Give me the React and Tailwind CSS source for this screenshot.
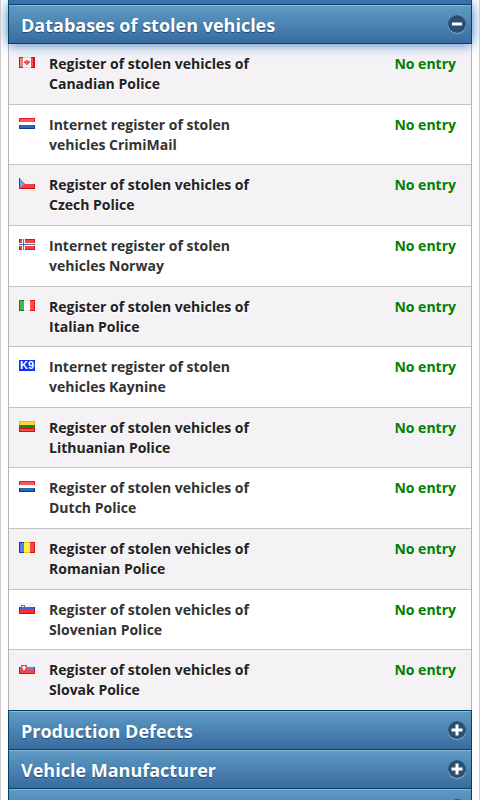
import React from 'react';
import clsx from 'clsx';

const Tricolor = ({ top, middle, bottom }) => (
    <>
        <rect width="16" height="4" fill={top} />
        <rect y="4" width="16" height="3" fill={middle} />
        <rect y="7" width="16" height="4" fill={bottom} />
    </>
);

const Vertical = ({ left, middle, right }) => (
    <>
        <rect width="5" height="11" fill={left} />
        <rect x="5" width="6" height="11" fill={middle} />
        <rect x="11" width="5" height="11" fill={right} />
    </>
);

const flags = {
    ca: (
        <>
            <rect width="16" height="11" fill="#fbf3f3" />
            <rect width="4" height="11" fill="#d81414" />
            <rect x="12" width="4" height="11" fill="#d81414" />
            <rect x="1" y="1" width="3" height="9" fill="#f08080" />
            <rect x="12" y="1" width="2" height="9" fill="#ee5a5a" />
            <path d="M4 0h8v1h-8zM4 10h8v1h-8z" fill="#e6d4d4" />
            <path d="M7 3h2v1h2v2h-1v1h-1v1h-2v-1h-1v-1h-1v-2h2z" fill="#ee5c5c" />
        </>
    ),
    nl: (
        <>
            <Tricolor top="#f01820" middle="#ffffff" bottom="#0c3c8c" />
            <rect x="1" y="1" width="14" height="3" fill="#f8585c" />
            <rect x="1" y="7" width="14" height="3" fill="#2e68b4" />
        </>
    ),
    cz: (
        <>
            <rect width="16" height="6" fill="#f2f2f6" />
            <rect y="6" width="16" height="5" fill="#dd1010" />
            <rect x="1" y="6" width="14" height="4" fill="#ee4242" />
            <path d="M0 0h1v1h1v1h1v1h1v1h1v1h1v1h-1v1h-1v1h-1v1h-1v1h-1v1h-1z" fill="#6aa4e4" />
            <path d="M0 0h1v11h-1z" fill="#1c4c9c" />
        </>
    ),
    no: (
        <>
            <rect width="16" height="11" fill="#dc1010" />
            <rect x="1" y="1" width="14" height="9" fill="#ee4444" />
            <path d="M3 0h3v11h-3zM0 4h16v3h-16z" fill="#f4f6fc" />
            <path d="M4 0h1v11h-1zM0 5h16v1h-16z" fill="#4a78bc" />
        </>
    ),
    it: (
        <>
            <Vertical left="#0c8a1c" middle="#fbfbfb" right="#f01010" />
            <rect x="1" y="1" width="4" height="9" fill="#4cb058" />
            <rect x="11" y="1" width="4" height="9" fill="#f85050" />
            <path d="M5 0h6v1h-6zM5 10h6v1h-6z" fill="#e2e2e2" />
        </>
    ),
    k9: (
        <>
            <rect width="16" height="11" fill="#0a35f0" />
            <text
                x="8"
                y="9"
                textAnchor="middle"
                fill="#ffffff"
                fontFamily="Liberation Sans, sans-serif"
                fontSize="11"
                fontWeight="bold"
            >
                K9
            </text>
        </>
    ),
    lt: (
        <>
            <Tricolor top="#f0b800" middle="#108a18" bottom="#d81010" />
            <rect x="1" y="1" width="14" height="3" fill="#f8d83c" />
            <rect x="1" y="8" width="14" height="2" fill="#f05040" />
        </>
    ),
    ro: (
        <>
            <Vertical left="#1038c4" middle="#ecc810" right="#e01010" />
            <rect x="1" y="1" width="4" height="9" fill="#5080e8" />
            <rect x="5" y="1" width="6" height="9" fill="#fff040" />
            <rect x="11" y="1" width="4" height="9" fill="#f44848" />
        </>
    ),
    si: (
        <>
            <Tricolor top="#f4f4f8" middle="#1030cc" bottom="#e80808" />
            <rect x="1" y="4" width="14" height="3" fill="#4060e4" />
            <rect x="1" y="7" width="14" height="3" fill="#fa3030" />
            <path d="M2 2h4v3h-1v1h-2v-1h-1z" fill="#5468c8" />
            <path d="M3 3h2v1h-2z" fill="#ffffff" />
        </>
    ),
    sk: (
        <>
            <Tricolor top="#f0f0f6" middle="#1c48d0" bottom="#e81010" />
            <rect x="1" y="4" width="14" height="3" fill="#5488ec" />
            <rect x="1" y="7" width="14" height="3" fill="#f84444" />
            <path d="M2 2h6v5h-1v1h-4v-1h-1z" fill="#f04848" />
            <path d="M4 3h2v1h1v1h-1v2h-2v-2h-1v-1h1z" fill="#ffffff" />
        </>
    ),
};

function Flag({ code }) {
    return (
        <svg
            className="block h-[11px] w-4 overflow-visible"
            viewBox="0 0 16 11"
            shapeRendering="crispEdges"
            aria-hidden="true"
        >
            {flags[code]}
        </svg>
    );
}

const registers = [
    { flag: 'ca', name: 'Register of stolen vehicles of Canadian Police' },
    { flag: 'nl', name: 'Internet register of stolen vehicles CrimiMail' },
    { flag: 'cz', name: 'Register of stolen vehicles of Czech Police' },
    { flag: 'no', name: 'Internet register of stolen vehicles Norway' },
    { flag: 'it', name: 'Register of stolen vehicles of Italian Police' },
    { flag: 'k9', name: 'Internet register of stolen vehicles Kaynine' },
    { flag: 'lt', name: 'Register of stolen vehicles of Lithuanian Police' },
    { flag: 'nl', name: 'Register of stolen vehicles of Dutch Police' },
    { flag: 'ro', name: 'Register of stolen vehicles of Romanian Police' },
    { flag: 'si', name: 'Register of stolen vehicles of Slovenian Police' },
    { flag: 'sk', name: 'Register of stolen vehicles of Slovak Police' },
];

function SectionHeader({ title, open }) {
    return (
        <h2>
            <button
                type="button"
                aria-expanded={open}
                className={clsx(
                    'flex w-full items-center justify-between border-x border-t border-[#044062] bg-linear-to-b from-[#5f9cc5] to-[#396b9e] pr-[5px] pl-3 text-left text-lg font-bold text-white [text-shadow:0_1px_1px_#194b7e]',
                    open
                        ? 'relative h-10 border-b shadow-[inset_0_1px_0_rgba(255,255,255,0.3),0_0_12px_#387bbe]'
                        : 'h-[39px] shadow-[inset_0_1px_0_rgba(255,255,255,0.3)]',
                )}
            >
                <span className="pt-px">{title}</span>
                <svg className="size-[18px] rounded-full shadow-[0_1px_0_rgba(255,255,255,0.4)]" viewBox="0 0 18 18">
                    <circle cx="9" cy="9" r="9" fill="#2b4f70" />
                    <path d={open ? 'M4 7.5h10v3H4z' : 'M7.5 3.5h3v4h4v3h-4v4h-3v-4h-4v-3h4z'} fill="#ffffff" />
                </svg>
            </button>
        </h2>
    );
}

function App() {
    return (
        <div className="h-screen overflow-hidden border-x border-[#cccccc] bg-white px-[7px] font-['Open_Sans',sans-serif]">
            <div className="h-1 border-x border-[#044062] bg-[#3b6fa5]" />
            <SectionHeader title="Databases of stolen vehicles" open />

            <table className="h-[666px] w-full border-separate border-spacing-0 border-x border-[#b3b3b3] text-sm leading-5 font-bold">
                <tbody>
                    {registers.map((item) => (
                        <tr key={item.name} className="group align-top text-[#333333] odd:bg-[#f5f2f6] odd:text-[#222222]">
                            <td className="w-10 border-b border-[#c4c2c5] pt-[13px] pl-[10px] group-last:border-b-0">
                                <Flag code={item.flag} />
                            </td>
                            <td className="border-b border-[#c4c2c5] pt-[10px] pb-[9px] group-last:border-b-0">
                                <div className="max-w-[220px] [text-shadow:0_1px_0_#ffffff]">{item.name}</div>
                            </td>
                            <td className="border-b border-[#c4c2c5] pt-[10px] pr-[15px] text-right text-[#008000] group-last:border-b-0">
                                No entry
                            </td>
                        </tr>
                    ))}
                </tbody>
            </table>

            <SectionHeader title="Production Defects" open={false} />
            <SectionHeader title="Vehicle Manufacturer" open={false} />
            <SectionHeader title="" open={false} />
        </div>
    );
}

export default App;
